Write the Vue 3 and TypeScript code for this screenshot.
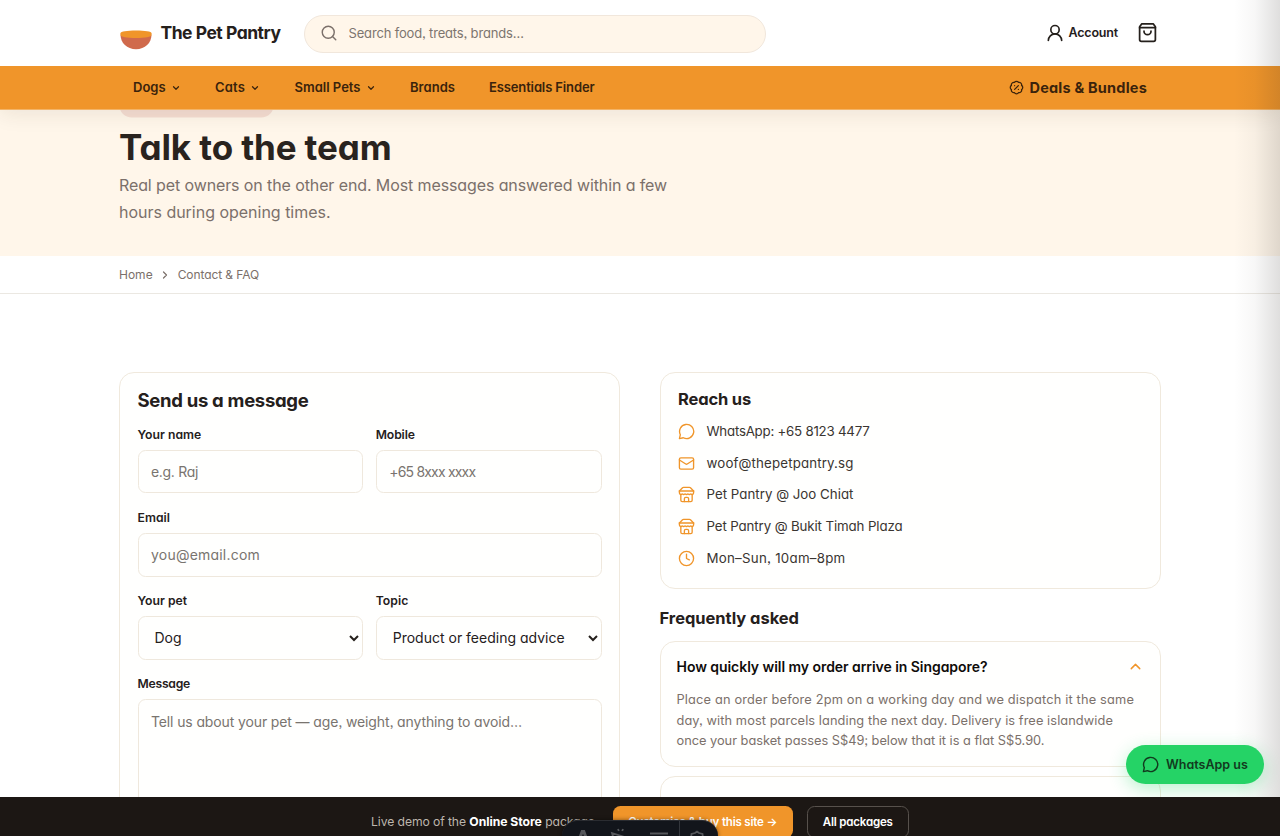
<script setup lang="ts">
import { ref } from 'vue'

interface NavItem { label: string; cls: string; menu: boolean }
const nav: NavItem[] = [
  { label: 'Dogs', cls: 'dogs', menu: true },
  { label: 'Cats', cls: 'cats', menu: true },
  { label: 'Small Pets', cls: 'small', menu: true },
  { label: 'Brands', cls: 'brands', menu: false },
  { label: 'Essentials Finder', cls: 'finder', menu: false },
]

interface Contact { icon: 'chat' | 'mail' | 'store' | 'clock'; text: string; cls: string }
const contacts: Contact[] = [
  { icon: 'chat', text: 'WhatsApp: +65 8123 4477', cls: 'c1' },
  { icon: 'mail', text: 'woof@thepetpantry.sg', cls: 'c2' },
  { icon: 'store', text: 'Pet Pantry @ Joo Chiat', cls: 'c3' },
  { icon: 'store', text: 'Pet Pantry @ Bukit Timah Plaza', cls: 'c4' },
  { icon: 'clock', text: 'Mon–Sun, 10am–8pm', cls: 'c5' },
]

const pet = ref('Dog')
const topic = ref('Product or feeding advice')
</script>

<template>
  <div class="page">
    <header class="header">
      <div class="top wrap">
        <div class="brand">
          <svg class="logo" width="32" height="20" viewBox="0 0 32 20">
            <path d="M.5 4.500C.5 13 7 19.200 16 19.200S31.500 13 31.500 4.500Z" fill="#d06a4c" />
            <path d="M.5 3.200C.5 1.500 7 .6 16 .6s15.500.9 15.500 2.600v1.800C31.500 7 25 8 16 8S.5 7 .5 5Z" fill="#f0952a" />
          </svg>
          <span class="brand-name">The Pet Pantry</span>
        </div>
        <label class="search">
          <svg class="ico" width="18" height="18" viewBox="0 0 24 24"><circle cx="11" cy="11" r="8" /><path d="m21 21-4.300-4.300" /></svg>
          <input type="text" placeholder="Search food, treats, brands…" />
        </label>
        <div class="actions">
          <svg class="ico" width="20" height="20" viewBox="0 0 24 24"><circle cx="12" cy="8" r="5" /><path d="M20 21a8 8 0 0 0-16 0" /></svg>
          <span class="account">Account</span>
          <svg class="ico bag" width="21" height="21" viewBox="0 0 24 24"><path d="M5.500 2 3 5.500V20a2 2 0 0 0 2 2h14a2 2 0 0 0 2-2V5.500L18.500 2Z" /><path d="M3 6.500h18" /><path d="M16 10.500a4 4 0 0 1-8 0" /></svg>
        </div>
      </div>
      <nav class="nav">
        <div class="wrap nav-in">
          <a v-for="n in nav" :key="n.label" class="nav-item" :class="n.cls">
            <span>{{ n.label }}</span>
            <svg v-if="n.menu" class="ico chev" width="10" height="10" viewBox="0 0 24 24"><path d="m6 9 6 6 6-6" /></svg>
          </a>
          <a class="deals">
            <svg class="ico" width="15" height="15" viewBox="0 0 24 24"><path d="M3.850 8.620a4 4 0 0 1 4.780-4.770 4 4 0 0 1 6.740 0 4 4 0 0 1 4.780 4.780 4 4 0 0 1 0 6.740 4 4 0 0 1-4.770 4.780 4 4 0 0 1-6.750 0 4 4 0 0 1-4.780-4.770 4 4 0 0 1 0-6.760Z" /><path d="m15 9-6 6M9 9h.01M15 15h.01" /></svg>
            <span>Deals &amp; Bundles</span>
          </a>
        </div>
      </nav>
    </header>

    <section class="hero">
      <div class="wrap">
        <div class="eyebrow"></div>
        <h1>Talk to the team</h1>
        <p class="lead">Real pet owners on the other end. Most messages answered within a few<br /><span class="lead2">hours during opening times.</span></p>
      </div>
    </section>

    <div class="crumbs">
      <div class="wrap crumbs-in">
        <span>Home</span>
        <svg class="ico" width="12" height="12" viewBox="0 0 24 24"><path d="m9 18 6-6-6-6" /></svg>
        <span class="here">Contact &amp; FAQ</span>
      </div>
    </div>

    <main class="wrap main">
      <form class="card form" @submit.prevent>
        <h2>Send us a message</h2>
        <div class="row">
          <label class="field"><span>Your name</span><input class="raj" placeholder="e.g. Raj" /></label>
          <label class="field"><span class="mob">Mobile</span><input class="tel" placeholder="+65 8xxx xxxx" /></label>
        </div>
        <label class="field"><span>Email</span><input class="mailin" placeholder="you@email.com" /></label>
        <div class="row">
          <label class="field"><span>Your pet</span><select v-model="pet"><option>Dog</option><option>Cat</option></select></label>
          <label class="field"><span>Topic</span><select v-model="topic"><option>Product or feeding advice</option></select></label>
        </div>
        <label class="field"><span class="msg">Message</span><textarea placeholder="Tell us about your pet — age, weight, anything to avoid…"></textarea></label>
      </form>

      <div class="side">
        <section class="card reach">
          <h3>Reach us</h3>
          <ul>
            <li v-for="c in contacts" :key="c.text" :class="c.cls">
              <svg class="ico" width="17" height="17" viewBox="0 0 24 24">
                <path v-if="c.icon === 'chat'" d="M7.500 20.800A10 10 0 1 0 3.300 16.500L2 22Z" />
                <template v-else-if="c.icon === 'mail'"><rect x="2" y="4" width="20" height="16" rx="2" /><path d="m22 7-8.970 5.700a1.940 1.940 0 0 1-2.060 0L2 7" /></template>
                <template v-else-if="c.icon === 'store'"><path d="m2 7 4.410-4.410A2 2 0 0 1 7.830 2h8.340a2 2 0 0 1 1.420.590L22 7" /><path d="M4 12v8a2 2 0 0 0 2 2h12a2 2 0 0 0 2-2v-8" /><path d="M15 22v-4a2 2 0 0 0-2-2h-2a2 2 0 0 0-2 2v4" /><path d="M2 7h20" /><path d="M22 7v3a2 2 0 0 1-2 2 2.700 2.700 0 0 1-1.590-.63.7.7 0 0 0-.82 0A2.700 2.700 0 0 1 16 12a2.700 2.700 0 0 1-1.590-.63.7.7 0 0 0-.82 0A2.700 2.700 0 0 1 12 12a2.700 2.700 0 0 1-1.590-.63.7.7 0 0 0-.82 0A2.700 2.700 0 0 1 8 12a2.700 2.700 0 0 1-1.590-.63.7.7 0 0 0-.82 0A2.700 2.700 0 0 1 4 12a2 2 0 0 1-2-2V7" /></template>
                <template v-else><circle cx="12" cy="12" r="10" /><path d="M12 6v6l4 2" /></template>
              </svg>
              <span>{{ c.text }}</span>
            </li>
          </ul>
        </section>
        <h3 class="faq-title">Frequently asked</h3>
        <section class="card faq">
          <div class="q"><span>How quickly will my order arrive in Singapore?</span><svg class="ico" width="17" height="17" viewBox="0 0 24 24"><path d="m18 15-6-6-6 6" /></svg></div>
          <p><span class="l1">Place an order before 2pm on a working day and we dispatch it the same</span><br /><span class="l2">day, with most parcels landing the next day. Delivery is free islandwide</span><br /><span class="l3">once your basket passes S$49; below that it is a flat S$5.90.</span></p>
        </section>
        <section class="card faq next"><div class="q"><span>Can I swap food my pet won’t eat?</span></div></section>
      </div>
    </main>

    <div class="edge"></div>
    <a class="whatsapp"><svg class="ico" width="17" height="17" viewBox="0 0 24 24"><path d="M7.500 20.800A10 10 0 1 0 3.300 16.500L2 22Z" /></svg><span>WhatsApp us</span></a>

    <footer class="demo">
      <span class="demo-text">Live demo of the <b>Online Store</b> package.</span>
      <a class="buy">Customise &amp; buy this site →</a>
      <a class="all">All packages</a>
    </footer>

    <div class="tools">
      <svg width="156" height="32" viewBox="0 0 156 32" fill="none" stroke="#55575b" stroke-width="1.800">
        <path d="M16 22 20.200 10.500h1.600L26 22M18 18h6" stroke-width="3" />
        <path d="m50 12 14 4.500-8 2.500-2 7ZM56 8l.8 2M61 8l-.8 2" />
        <path d="M88 12.500h18M92 19h14" />
        <path d="M117.500 0v32" stroke="#33363c" stroke-width="1" />
        <path d="m126 18 3-1 .5-4 3.500-1 2-1.500 2 1.500 3.500 1 .5 4 3 1M131 21a4.500 4.500 0 0 1 8 0" />
      </svg>
    </div>
  </div>
</template>

<style>
html, body { margin: 0; background: #fff; overflow: hidden; }
</style>

<style scoped>
* { box-sizing: border-box; }
.page { position: relative; height: 836px; overflow: hidden; background: #fff; color: #25201c; font-family: Inter, "Noto Sans", sans-serif; font-feature-settings: "cv11", "ss03"; }
input, select, textarea { font: inherit; font-feature-settings: inherit; color: inherit; }
h1, h2, h3, p, ul { margin: 0; padding: 0; }
.wrap { width: 1042px; margin: 0 auto; }
.ico { fill: none; stroke: currentColor; stroke-width: 2; stroke-linecap: round; stroke-linejoin: round; flex: none; display: block; }

.header { position: relative; z-index: 5; box-shadow: 0 4px 20px rgba(60, 40, 20, .09); background: #fff; }
.top { height: 66px; display: flex; align-items: center; }
.brand { display: flex; align-items: center; width: 185px; gap: 8.500px; padding-left: 1px; }
.logo { margin-top: 13px; }
.brand-name { font-size: 17.500px; font-weight: 700; letter-spacing: -.0277em; white-space: nowrap; margin-top: -1.500px; }
.search { width: 462px; height: 38px; margin-top: 1px; border: 1px solid #f1e7dc; border-radius: 19px; background: #fff6ea; display: flex; align-items: center; padding: 0 15px; gap: 10.500px; color: #7b706a; }
.search .ico { stroke-width: 1.900; margin-top: -1px; }
.search input { border: 0; background: none; outline: none; padding: 0 0 1px; flex: 1; font-size: 13px; letter-spacing: -.0127em; }
.search input::placeholder { color: #7d756f; }
.actions { margin-left: auto; display: flex; align-items: center; padding-right: 3px; margin-top: -.5px; }
.account { font-size: 12.500px; font-weight: 600; letter-spacing: -.0148em; margin-left: 4px; width: 68.500px; }

.nav { background: #f0952a; height: 43.500px; color: #3a230c; border-bottom: 1px solid #f3b467; }
.nav-in { display: flex; align-items: center; height: 42px; padding: 0 14px; font-size: 13px; font-weight: 600; }
.nav-item { display: flex; align-items: center; gap: 5.500px; flex: none; white-space: nowrap; }
.nav-item .chev { margin-top: 2px; stroke-width: 2.900; }
.dogs { width: 82px; }
.cats { width: 79.500px; letter-spacing: .0129em; }
.small { width: 115.500px; }
.brands { width: 79px; letter-spacing: .003em; }
.finder { letter-spacing: -.0099em; }
.deals { margin-left: auto; display: flex; align-items: center; gap: 6px; font-size: 14.500px; font-weight: 700; letter-spacing: .0143em; }
.deals .ico { margin-top: 1px; }

.hero { background: #fff6ea; height: 146.500px; }
.eyebrow { width: 155px; height: 26px; border-radius: 13px; background: #f5ddd2; transform: translateY(-18.500px); }
h1 { font-size: 35px; line-height: 42px; font-weight: 700; letter-spacing: -.0029em; margin-top: -10px; color: #29231e; }
.lead { font-size: 16px; line-height: 26.600px; letter-spacing: -.0067em; color: #7b706a; margin-top: 4.500px; }
.lead2 { letter-spacing: -.001em; }

.crumbs { height: 38px; border-bottom: 1px solid #ebe8e2; background: #fff; }
.crumbs-in { display: flex; align-items: center; height: 37px; font-size: 12px; color: #7b706a; gap: 6.500px; }
.crumbs .ico { stroke-width: 2.400; }
.here { letter-spacing: -.0065em; }

.main { display: grid; grid-template-columns: 501px 501.500px; justify-content: space-between; align-items: start; margin-top: 78px; }
.card { border: 1px solid #f0e9dd; border-radius: 15px; background: #fffffe; }
.form { padding: 16px 17.500px 20px; height: 520px; }
h2 { font-size: 18.500px; line-height: 22px; letter-spacing: -.0159em; margin-bottom: 14.500px; }
.row { display: grid; grid-template-columns: 1fr 1fr; gap: 12.500px; }
.field { display: block; margin-bottom: 15.200px; }
.field span { display: block; font-size: 12.200px; font-weight: 600; line-height: 18px; margin-bottom: 6.300px; letter-spacing: .002em; }
.field .mob { letter-spacing: -.0117em; }
.field .msg { letter-spacing: -.0209em; }
.field input, .field select, .field textarea { display: block; width: 100%; height: 43.700px; border: 1px solid #efe8dd; border-radius: 7.500px; background: #fffffe; padding: 0 12.500px; font-size: 14px; outline: none; resize: none; }
.field select { padding-left: 12px; }
.field ::placeholder { color: #79746f; }
.field .raj { letter-spacing: -.0226em; }
.field .tel { letter-spacing: -.0577em; }
.field .mailin { letter-spacing: .015em; }
.field textarea { height: 130px; padding-top: 11.500px; line-height: 19px; letter-spacing: -.009em; }

.reach { height: 216.500px; padding: 15.500px 17.500px; }
h3 { font-size: 16.500px; line-height: 20px; letter-spacing: -.0097em; }
ul { list-style: none; margin-top: 6.300px; }
li { display: flex; align-items: center; gap: 11.500px; height: 31.850px; font-size: 13.300px; color: #3a3531; }
li .ico { color: #f0952a; stroke-width: 1.900; margin-top: 1px; }
.c1 { letter-spacing: -.0178em; }
.c2 { letter-spacing: .0107em; }
.c3 { letter-spacing: .0013em; }
.c4 { letter-spacing: -.0089em; }
.c5 { letter-spacing: .0196em; }
.faq-title { margin-top: 19.700px; letter-spacing: -.0016em; }
.faq { margin-top: 12.500px; height: 126.500px; padding: 15.500px 16px; }
.faq .q { display: flex; justify-content: space-between; align-items: center; height: 18px; font-size: 14px; font-weight: 600; letter-spacing: -.0039em; color: #0f0c0a; }
.q .ico { color: #f0952a; stroke-width: 2; }
.faq p { font-size: 12.800px; line-height: 20.500px; color: #7b706a; margin-top: 15.300px; white-space: nowrap; }
.l1 { letter-spacing: .0132em; }
.l2 { letter-spacing: .0065em; }
.l3 { letter-spacing: -.0011em; }
.faq.next { margin-top: 8.500px; padding-top: 16.500px; }

.edge { position: absolute; z-index: 6; top: 0; right: 0; width: 46px; height: 797px; background: linear-gradient(to right, rgba(40, 35, 30, 0), rgba(40, 35, 30, .035) 45%, rgba(40, 35, 30, .15)); }
.whatsapp { position: absolute; z-index: 7; left: 1126px; top: 745px; width: 138px; height: 39px; border-radius: 20px; background: #25d366; color: #123a1e; display: flex; align-items: center; gap: 7.500px; padding-left: 15.500px; font-size: 12.500px; font-weight: 600; box-shadow: 0 5px 18px rgba(37, 211, 102, .32); }

.demo { position: absolute; z-index: 8; left: 0; right: 0; top: 797px; height: 39px; background: #1c1714; overflow: hidden; display: flex; align-items: flex-start; padding: 9px 0 0 371px; font-size: 12.200px; color: #bdb6ad; }
.demo-text { width: 241.500px; line-height: 31px; letter-spacing: -.0078em; }
.demo b { color: #fff; font-weight: 700; letter-spacing: -.0037em; }
.buy, .all { height: 32px; line-height: 32px; border-radius: 7.500px; color: #fff; font-size: 11.500px; font-weight: 600; text-align: center; white-space: nowrap; }
.buy { width: 180.500px; background: #f0952a; letter-spacing: -.016em; }
.all { width: 101.500px; margin-left: 14px; border: 1px solid #57514c; line-height: 31px; letter-spacing: -.0154em; }
.tools { position: absolute; z-index: 9; left: 562px; top: 819.500px; width: 156px; height: 32px; border-radius: 16px; background: #12151b; box-shadow: 0 0 4px rgba(0, 0, 0, .5); border-top: 1px solid #2a2c31; }
</style>
